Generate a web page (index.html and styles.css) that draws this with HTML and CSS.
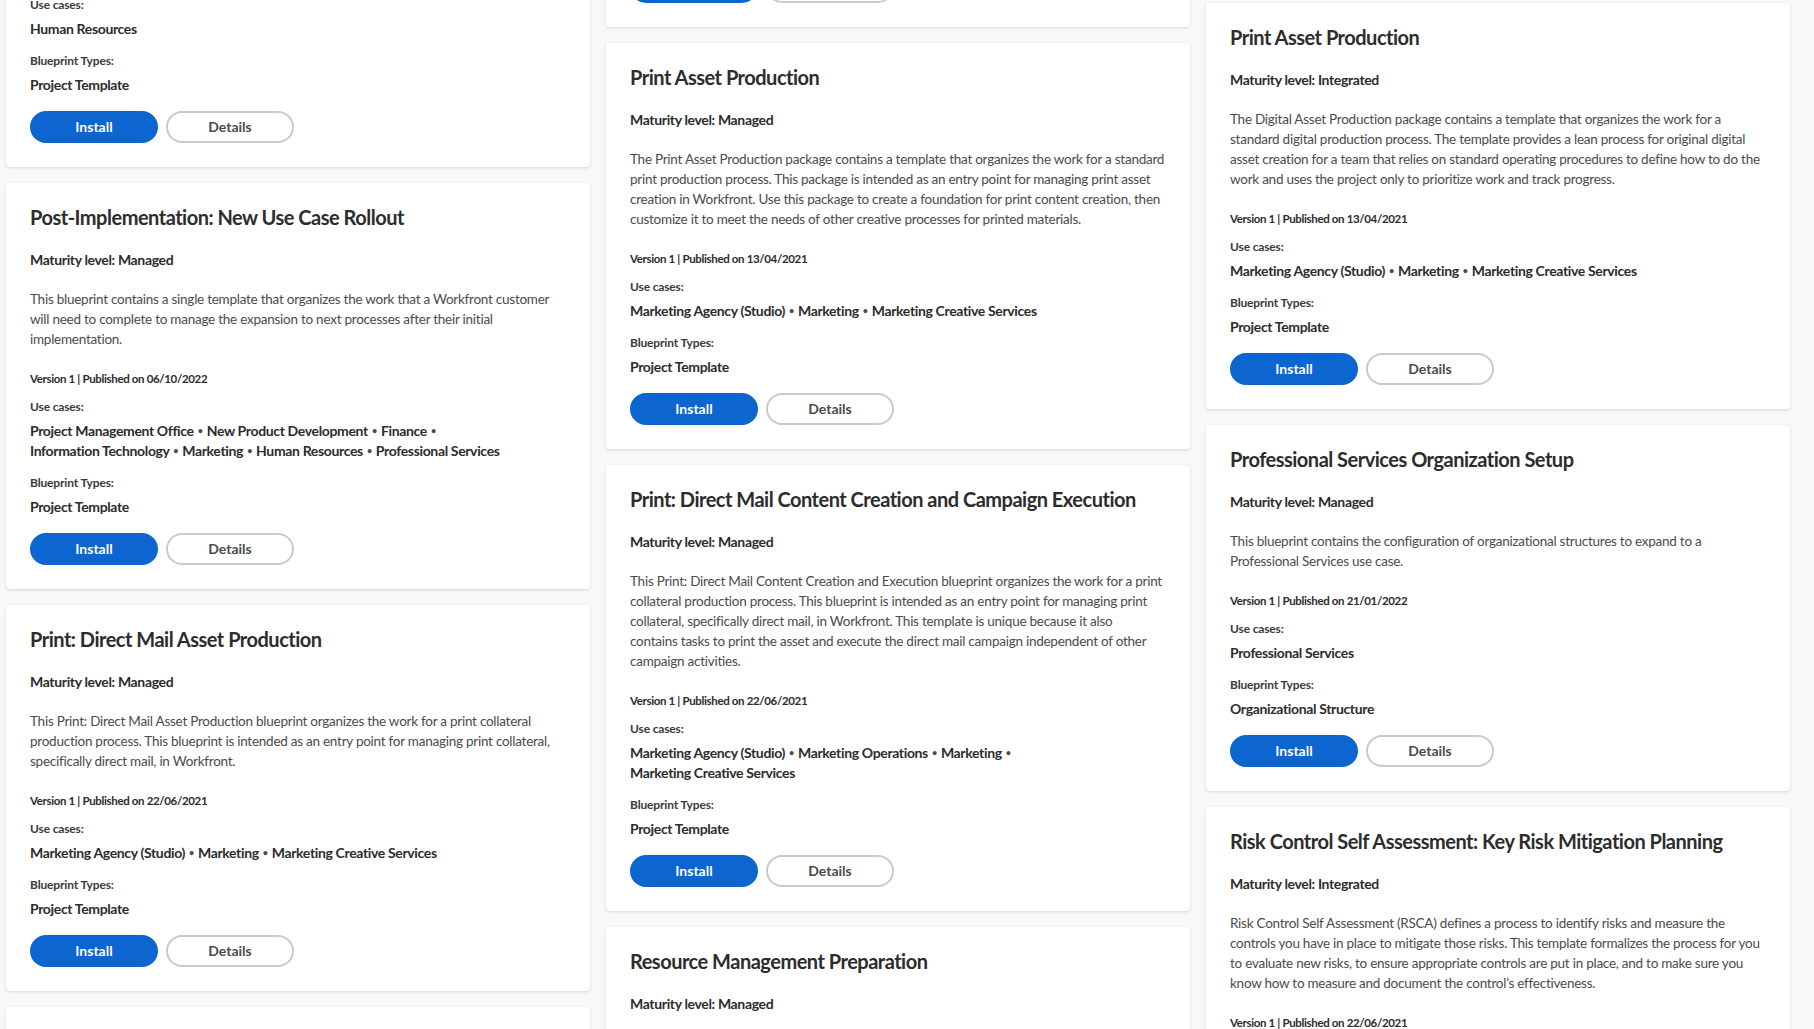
FILE: index.html
```html
<!DOCTYPE html>
<html lang="en">
<head>
<meta charset="utf-8">
<title>Blueprints</title>
<link rel="stylesheet" href="styles.css">
</head>
<body>
<div class="viewport">
  <div class="board">
    <div class="col col-1">
      <article class="card">
        <h2 class="title">Human Resources Onboarding</h2>
        <p class="maturity">Maturity level: Managed</p>
        <p class="desc">This blueprint contains a template that organizes the work required to onboard a new<br>employee, including the setup of accounts, equipment and introductory training<br>sessions.</p>
        <p class="version">Version 1 | Published on 22/06/2021</p>
        <p class="label">Use cases:</p>
        <p class="values">Human Resources</p>
        <p class="label">Blueprint Types:</p>
        <p class="values last">Project Template</p>
        <div class="actions"><button class="btn btn-primary">Install</button><button class="btn btn-secondary">Details</button></div>
      </article>
      <article class="card">
        <h2 class="title">Post-Implementation: New Use Case Rollout</h2>
        <p class="maturity">Maturity level: Managed</p>
        <p class="desc">This blueprint contains a single template that organizes the work that a Workfront customer<br>will need to complete to manage the expansion to next processes after their initial<br>implementation.</p>
        <p class="version">Version 1 | Published on 06/10/2022</p>
        <p class="label">Use cases:</p>
        <p class="values">Project Management Office <span class="sep">•</span> New Product Development <span class="sep">•</span> Finance <span class="sep">•</span><br>Information Technology <span class="sep">•</span> Marketing <span class="sep">•</span> Human Resources <span class="sep">•</span> Professional Services</p>
        <p class="label">Blueprint Types:</p>
        <p class="values last">Project Template</p>
        <div class="actions"><button class="btn btn-primary">Install</button><button class="btn btn-secondary">Details</button></div>
      </article>
      <article class="card">
        <h2 class="title">Print: Direct Mail Asset Production</h2>
        <p class="maturity">Maturity level: Managed</p>
        <p class="desc">This Print: Direct Mail Asset Production blueprint organizes the work for a print collateral<br>production process. This blueprint is intended as an entry point for managing print collateral,<br>specifically direct mail, in Workfront.</p>
        <p class="version">Version 1 | Published on 22/06/2021</p>
        <p class="label">Use cases:</p>
        <p class="values">Marketing Agency (Studio) <span class="sep">•</span> Marketing <span class="sep">•</span> Marketing Creative Services</p>
        <p class="label">Blueprint Types:</p>
        <p class="values last">Project Template</p>
        <div class="actions"><button class="btn btn-primary">Install</button><button class="btn btn-secondary">Details</button></div>
      </article>
      <article class="card">
        <h2 class="title">Product Launch Planning</h2>
        <p class="maturity">Maturity level: Managed</p>
        <p class="desc">This blueprint contains a template that organizes the work for a product launch.</p>
      </article>
    </div>

    <div class="col col-2">
      <article class="card">
        <h2 class="title">Portfolio Prioritization</h2>
        <p class="maturity">Maturity level: Managed</p>
        <p class="desc">This blueprint contains the configuration and templates needed to prioritize incoming<br>requests and projects within a portfolio. Use it to define scoring criteria, to align<br>stakeholders and to make sure that the work with the highest value is delivered<br>first.</p>
        <p class="version">Version 1 | Published on 13/04/2021</p>
        <p class="label">Use cases:</p>
        <p class="values">Project Management Office</p>
        <p class="label">Blueprint Types:</p>
        <p class="values last">Project Template</p>
        <div class="actions"><button class="btn btn-primary">Install</button><button class="btn btn-secondary">Details</button></div>
      </article>
      <article class="card">
        <h2 class="title">Print Asset Production</h2>
        <p class="maturity">Maturity level: Managed</p>
        <p class="desc">The Print Asset Production package contains a template that organizes the work for a standard<br>print production process. This package is intended as an entry point for managing print asset<br>creation in Workfront. Use this package to create a foundation for print content creation, then<br>customize it to meet the needs of other creative processes for printed materials.</p>
        <p class="version">Version 1 | Published on 13/04/2021</p>
        <p class="label">Use cases:</p>
        <p class="values">Marketing Agency (Studio) <span class="sep">•</span> Marketing <span class="sep">•</span> Marketing Creative Services</p>
        <p class="label">Blueprint Types:</p>
        <p class="values last">Project Template</p>
        <div class="actions"><button class="btn btn-primary">Install</button><button class="btn btn-secondary">Details</button></div>
      </article>
      <article class="card">
        <h2 class="title">Print: Direct Mail Content Creation and Campaign Execution</h2>
        <p class="maturity">Maturity level: Managed</p>
        <p class="desc">This Print: Direct Mail Content Creation and Execution blueprint organizes the work for a print<br>collateral production process. This blueprint is intended as an entry point for managing print<br>collateral, specifically direct mail, in Workfront. This template is unique because it also<br>contains tasks to print the asset and execute the direct mail campaign independent of other<br>campaign activities.</p>
        <p class="version">Version 1 | Published on 22/06/2021</p>
        <p class="label">Use cases:</p>
        <p class="values">Marketing Agency (Studio) <span class="sep">•</span> Marketing Operations <span class="sep">•</span> Marketing <span class="sep">•</span><br>Marketing Creative Services</p>
        <p class="label">Blueprint Types:</p>
        <p class="values last">Project Template</p>
        <div class="actions"><button class="btn btn-primary">Install</button><button class="btn btn-secondary">Details</button></div>
      </article>
      <article class="card">
        <h2 class="title">Resource Management Preparation</h2>
        <p class="maturity">Maturity level: Managed</p>
        <p class="desc">This blueprint contains the configuration needed to prepare for resource management.</p>
      </article>
    </div>

    <div class="col col-3">
      <article class="card">
        <h2 class="title">Print Asset Production</h2>
        <p class="maturity">Maturity level: Integrated</p>
        <p class="desc">The Digital Asset Production package contains a template that organizes the work for a<br>standard digital production process. The template provides a lean process for original digital<br>asset creation for a team that relies on standard operating procedures to define how to do the<br>work and uses the project only to prioritize work and track progress.</p>
        <p class="version">Version 1 | Published on 13/04/2021</p>
        <p class="label">Use cases:</p>
        <p class="values">Marketing Agency (Studio) <span class="sep">•</span> Marketing <span class="sep">•</span> Marketing Creative Services</p>
        <p class="label">Blueprint Types:</p>
        <p class="values last">Project Template</p>
        <div class="actions"><button class="btn btn-primary">Install</button><button class="btn btn-secondary">Details</button></div>
      </article>
      <article class="card">
        <h2 class="title">Professional Services Organization Setup</h2>
        <p class="maturity">Maturity level: Managed</p>
        <p class="desc">This blueprint contains the configuration of organizational structures to expand to a<br>Professional Services use case.</p>
        <p class="version">Version 1 | Published on 21/01/2022</p>
        <p class="label">Use cases:</p>
        <p class="values">Professional Services</p>
        <p class="label">Blueprint Types:</p>
        <p class="values last">Organizational Structure</p>
        <div class="actions"><button class="btn btn-primary">Install</button><button class="btn btn-secondary">Details</button></div>
      </article>
      <article class="card">
        <h2 class="title">Risk Control Self Assessment: Key Risk Mitigation Planning</h2>
        <p class="maturity">Maturity level: Integrated</p>
        <p class="desc">Risk Control Self Assessment (RSCA) defines a process to identify risks and measure the<br>controls you have in place to mitigate those risks. This template formalizes the process for you<br>to evaluate new risks, to ensure appropriate controls are put in place, and to make sure you<br>know how to measure and document the control’s effectiveness.</p>
        <p class="version">Version 1 | Published on 22/06/2021</p>
        <p class="label">Use cases:</p>
        <p class="values">Finance</p>
        <p class="label">Blueprint Types:</p>
        <p class="values last">Project Template</p>
        <div class="actions"><button class="btn btn-primary">Install</button><button class="btn btn-secondary">Details</button></div>
      </article>
    </div>
  </div>
</div>
</body>
</html>
```
FILE: styles.css
```css
html, body {
  margin: 0;
  padding: 0;
  height: 100%;
  overflow: hidden;
  background: #f8f8f8;
}

body {
  font-family: Lato, "Liberation Sans", sans-serif;
  color: #2c2c2c;
}

.viewport {
  height: 1029px;
  overflow: hidden;
}

.board {
  display: grid;
  grid-template-columns: repeat(3, 584px);
  column-gap: 16px;
  align-items: start;
  padding: 0 6px;
}

.col {
  display: flex;
  flex-direction: column;
  gap: 16px;
}

/* page is scrolled: each masonry column shows its cards from a different offset */
.col-1 { margin-top: -219px; }
.col-2 { margin-top: -379px; }
.col-3 { margin-top: 3px; }

.card {
  background: #ffffff;
  border-radius: 4px;
  box-shadow: 0 1px 3px rgba(0, 0, 0, 0.14);
  padding: 22px 24px 24px;
}

.card p { margin: 0; }

.title {
  margin: 0 0 21px;
  font-size: 20px;
  line-height: 24px;
  font-weight: 700;
  letter-spacing: -0.5px;
  color: #2c2c2c;
  white-space: nowrap;
}

.maturity {
  font-size: 14px;
  line-height: 20px;
  font-weight: 700;
  letter-spacing: -0.35px;
  color: #2c2c2c;
  margin-bottom: 19px !important;
}

.desc {
  font-size: 13.5px;
  line-height: 20px;
  letter-spacing: -0.25px;
  color: #4b4b4b;
  white-space: nowrap;
  margin-bottom: 22px !important;
}

.version {
  font-size: 11.5px;
  line-height: 16px;
  font-weight: 700;
  letter-spacing: -0.35px;
  color: #2c2c2c;
  margin-bottom: 12px !important;
}

.label {
  font-size: 12px;
  line-height: 16px;
  font-weight: 700;
  letter-spacing: -0.15px;
  color: #3a3a3a;
  margin-bottom: 6px !important;
}

.values {
  font-size: 14px;
  line-height: 20px;
  font-weight: 700;
  letter-spacing: -0.35px;
  color: #2c2c2c;
  white-space: nowrap;
  margin-bottom: 14px !important;
}

.values.last { margin-bottom: 16px !important; }

.sep {
  display: inline-block;
  font-size: 9px;
  line-height: 20px;
  vertical-align: top;
  margin: 0 1px;
  color: #4b4b4b;
}

.actions {
  display: flex;
  gap: 8px;
}

.btn {
  box-sizing: border-box;
  width: 128px;
  height: 32px;
  border-radius: 16px;
  font-family: inherit;
  font-size: 14px;
  font-weight: 700;
  line-height: 26px;
  padding: 0 0 1px;
  cursor: pointer;
}

.btn-primary {
  background: #0d66d0;
  border: 2px solid #0d66d0;
  color: #ffffff;
}

.btn-secondary {
  background: #ffffff;
  border: 2px solid #cacaca;
  color: #4b4b4b;
}
```
